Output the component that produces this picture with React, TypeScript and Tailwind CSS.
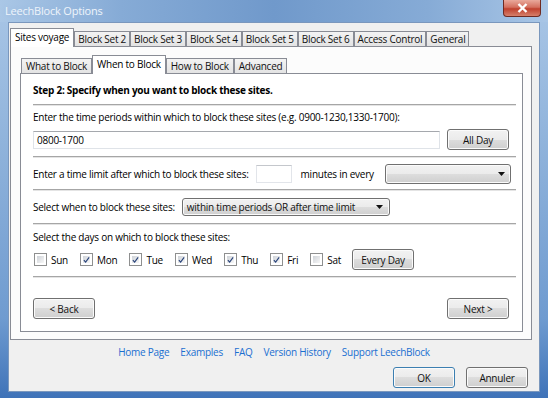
import type { ReactNode } from "react";

const btnBase =
  "flex items-center justify-center rounded-[3px] border bg-[linear-gradient(#f2f2f2_0%,#ebebeb_50%,#dddddd_50%,#cfcfcf_100%)] shadow-[inset_0_0_0_1px_#fbfbfb] text-[#111]";

function Btn({ children, className = "", primary = false }: { children: ReactNode; className?: string; primary?: boolean }) {
  return <div className={`${btnBase} ${primary ? "border-[#3c7fb1]" : "border-[#707070]"} ${className}`}>{children}</div>;
}

function Check({ on }: { on: boolean }) {
  return (
    <div className="w-[13px] h-[13px] border border-[#8e8f8f] bg-white p-[2px] shrink-0">
      <div className="w-full h-full bg-[linear-gradient(135deg,#cfd3d8,#f7f7f7)] flex items-center justify-center">
        {on && (
          <svg width="8" height="8" viewBox="0 0 8 8">
            <path d="M1 4.2 L3 6.5 L7 1" stroke="#28427a" strokeWidth="1.3" fill="none" />
          </svg>
        )}
      </div>
    </div>
  );
}

function Arrow() {
  return (
    <svg width="7" height="4" viewBox="0 0 7 4" className="shrink-0">
      <path d="M0 0h7L3.5 4z" fill="#111" />
    </svg>
  );
}

function Sep() {
  return <div className="h-[2px] border-t border-[#a6a6a6] bg-[#e4e4e4]" />;
}

function Tab({ label, active, tight }: { label: string; active?: boolean; tight?: boolean }) {
  return active ? (
    <div className="relative z-10 -mb-px h-[19px] px-[4px] pb-[2px] flex items-center border border-b-0 border-[#898c95] bg-white text-black whitespace-nowrap">{label}</div>
  ) : (
    <div className={`h-[15px] ${tight ? "px-[3px]" : "px-[4px]"} flex items-center border border-b-0 border-[#898c95] bg-[linear-gradient(#f3f3f3,#e3e3e3)] text-[#111] whitespace-nowrap`}>{label}</div>
  );
}

const outerTabs = ["Block Set 2", "Block Set 3", "Block Set 4", "Block Set 5", "Block Set 6", "Access Control", "General"];
const innerTabs = ["What to Block", "When to Block", "How to Block", "Advanced"];
const days = [
  { d: "Sun", on: false },
  { d: "Mon", on: true },
  { d: "Tue", on: true },
  { d: "Wed", on: true },
  { d: "Thu", on: true },
  { d: "Fri", on: true },
  { d: "Sat", on: false },
];
const links = ["Home Page", "Examples", "FAQ", "Version History", "Support LeechBlock"];

export default function App() {
  return (
    <div className="w-[548px] h-[398px] overflow-hidden flex flex-col bg-[linear-gradient(#a9c6e6_0%,#8db1da_40%,#6f9bd0_80%,#3f73b8_100%)] font-['Open_Sans',sans-serif] text-[10px] leading-[14px] tracking-[-0.25px] text-black">
      {/* title bar */}
      <div className="h-[22px] shrink-0 flex items-start justify-between bg-[linear-gradient(90deg,#aac7e6_0%,#86abd6_22%,#7099cb_50%,#86abd6_78%,#a9c6e6_100%)]">
        <span className="pl-[5px] pt-[4px] text-[11px] tracking-[-0.2px] text-[#eef4fb] [text-shadow:0_0_4px_#9ab9dd]">LeechBlock Options</span>
        <div className="mr-[7px] w-[38px] h-[17px] rounded-b-[4px] border border-t-0 border-[#6e2a22] bg-[linear-gradient(#e9a99c_0%,#d4705f_45%,#c0412e_55%,#d6806b_100%)] flex items-center justify-center">
          <svg width="11" height="10" viewBox="0 0 11 10">
            <path d="M1.5 1 L9.5 9 M9.5 1 L1.5 9" stroke="#fff" strokeWidth="2.4" />
          </svg>
        </div>
      </div>

      {/* client */}
      <div className="mx-[8px] h-[370px] shrink-0 flex flex-col bg-[#f0f0f0] border border-[#7a97bd]">
        <div className="flex items-end h-[17px] mt-[6px] ml-px">
          <Tab label="Sites voyage" active />
          {outerTabs.map((t) => (
            <Tab key={t} label={t} tight />
          ))}
        </div>

        <div className="ml-px mr-[7px] h-[294px] flex flex-col border border-[#898c95] bg-[#fcfcfc]">
          <div className="flex items-end h-[17px] mt-[9px] ml-[10px]">
            {innerTabs.map((t) => (
              <Tab key={t} label={t} active={t === "When to Block"} />
            ))}
          </div>

          <div className="ml-[9px] mr-[8px] flex-1 mb-[7px] border border-[#898c95] bg-white pl-[12px] pr-[6px] pt-[9px] flex flex-col">
            <div className="font-bold">Step 2: Specify when you want to block these sites.</div>
            <div className="mt-[7px]"><Sep /></div>

            <div className="mt-[4px]">Enter the time periods within which to block these sites (e.g. 0900-1230,1330-1700):</div>
            <div className="mt-[5px] h-[21px] flex items-center pr-[7px]">
              <div className="w-[407px] h-[18px] border border-[#dfe3e8] border-t-[#a5a8ad] bg-white flex items-center px-[3px]">0800-1700</div>
              <Btn className="ml-auto w-[62px] h-[21px]">All Day</Btn>
            </div>
            <div className="mt-[6px]"><Sep /></div>

            <div className="mt-[6px] h-[20px] flex items-center pr-[5px] whitespace-nowrap">
              <span>Enter a time limit after which to block these sites:</span>
              <div className="ml-[7px] w-[36px] h-[18px] border border-[#e2e5ea] border-t-[#c4c7cc] bg-white" />
              <span className="ml-[9px]">minutes in every</span>
              <Btn className="ml-auto w-[126px] h-[20px] !justify-end pr-[5px]">
                <Arrow />
              </Btn>
            </div>
            <div className="mt-[5px]"><Sep /></div>

            <div className="mt-[7px] h-[18px] flex items-center whitespace-nowrap">
              <span>Select when to block these sites:</span>
              <Btn className="ml-[7px] w-[208px] h-[18px] !justify-between pl-[4px] pr-[6px]">
                <span>within time periods OR after time limit</span>
                <Arrow />
              </Btn>
            </div>
            <div className="mt-[7px]"><Sep /></div>

            <div className="mt-[5px]">Select the days on which to block these sites:</div>
            <div className="mt-[5px] h-[21px] flex items-center pl-[1px]">
              {days.map((x) => (
                <div key={x.d} className="flex items-center mr-[12px]">
                  <Check on={x.on} />
                  <span className="ml-[4px]">{x.d}</span>
                </div>
              ))}
              <Btn className="w-[62px] h-[21px] -ml-[1px]">Every Day</Btn>
            </div>
            <div className="mt-[6px]"><Sep /></div>

            <div className="mt-[20px] flex justify-between pr-[7px]">
              <Btn className="w-[62px] h-[21px]">&lt; Back</Btn>
              <Btn className="w-[62px] h-[21px]">Next &gt;</Btn>
            </div>
          </div>
        </div>

        <div className="mt-[5px] flex justify-center gap-[11px] text-[#1a6fd0]">
          {links.map((l) => (
            <span key={l}>{l}</span>
          ))}
        </div>

        <div className="mt-[8px] flex justify-end gap-[11px] mr-[11px]">
          <Btn primary className="w-[62px] h-[21px]">OK</Btn>
          <Btn className="w-[62px] h-[21px]">Annuler</Btn>
        </div>
      </div>
    </div>
  );
}
